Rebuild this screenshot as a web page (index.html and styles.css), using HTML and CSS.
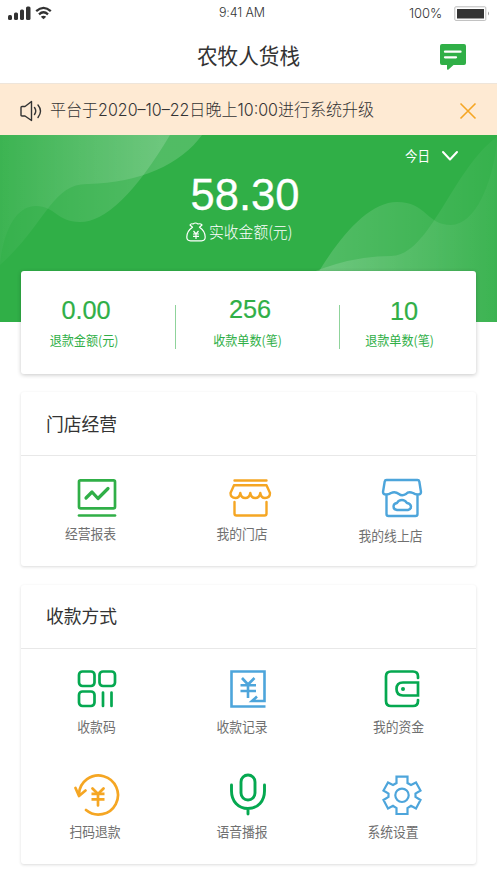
FILE: index.html
```html
<!DOCTYPE html>
<html lang="zh-CN">
<head>
<meta charset="utf-8">
<title>农牧人货栈</title>
<link rel="stylesheet" href="styles.css">
</head>
<body>
<header class="status">
  <svg class="signal" width="46" height="16" viewBox="0 0 46 16">
    <g fill="#333"><rect x="0" y="10" width="4" height="5" rx="1.5"/><rect x="6" y="7.500" width="4" height="7.500" rx="1.500"/><rect x="12" y="4.500" width="4" height="10.500" rx="1.500"/><rect x="18" y="1.500" width="4.500" height="13.500" rx="1.500"/></g>
    <g fill="none" stroke="#333" stroke-width="2.300"><path d="M28.200 6.200Q35.500-.400 42.800 6.200"/><path d="M31 9.300Q35.500 5.300 40 9.300"/></g>
    <path d="M32.800 11.700Q35.500 9.600 38.200 11.700L35.500 14.300Z" fill="#333"/>
  </svg>
  <span class="clock">9:41 AM</span>
  <span class="percent">100%</span>
  <svg class="battery" width="36" height="16" viewBox="0 0 36 16"><rect x=".8" y=".8" width="31" height="13.600" rx="1" fill="#fff" stroke="#bbb"/><rect x="3" y="3" width="27" height="9.500" fill="#333"/><path d="M34 5.500q2 2 0 4z" fill="#999"/></svg>
</header>
<div class="titlebar">
  <h1 class="title">农牧人货栈</h1>
  <svg class="message" width="28" height="28" viewBox="0 0 28 28"><path d="M3 1H25Q27 1 27 3V20Q27 22 25 22H14.500L9.500 26.500Q8 27.500 8 25.500V22H3Q1 22 1 20V3Q1 1 3 1Z" fill="#30af47"/><path d="M6 8.700H21.500M6 14.300H17" stroke="#fff" stroke-width="2.300" stroke-linecap="round"/></svg>
</div>
<div class="notice">
  <svg class="speaker" width="23" height="22" viewBox="0 0 23 22" fill="none" stroke="#333" stroke-width="1.400" stroke-linejoin="round" stroke-linecap="round"><path d="M1 7.500Q1 6.500 2 6.500H5L11.500 1.500V20.500L5 16H2Q1 16 1 15ZM14.500 7.500Q17 11 14.500 14.500M18 5Q23 11 18 17.500"/></svg>
  <span class="notice-text">平台于<span class="latin">2020–10–22</span>日晚上<span class="latin">10:00</span>进行系统升级</span>
  <svg class="close" width="18" height="18" viewBox="0 0 18 18" stroke="#f5a623" stroke-width="1.600"><path d="M1.500 1.500 16.500 16.500M16.500 1.500 1.500 16.500"/></svg>
</div>
<main class="page">
  <section class="hero">
    <svg class="waves" viewBox="0 0 497 187" preserveAspectRatio="none">
      <defs>
        <linearGradient id="left" gradientUnits="userSpaceOnUse" x1="0" y1="0" x2="200" y2="0"><stop offset="0" stop-color="#fff" stop-opacity=".03"/><stop offset=".8" stop-color="#fff" stop-opacity=".16"/><stop offset="1" stop-color="#fff" stop-opacity=".16"/></linearGradient>
        <linearGradient id="right" gradientUnits="userSpaceOnUse" x1="310" y1="0" x2="497" y2="0"><stop offset="0" stop-color="#fff" stop-opacity=".17"/><stop offset="1" stop-color="#fff" stop-opacity=".03"/></linearGradient>
      </defs>
      <path d="M0 0H170Q118 87 80 87C57 87 55 71 36 71C16 71 4 95 0 128Z" fill="url(#left)"/>
      <path d="M0 0H202C181 29 140 48 88 49C52 48 46 89 0 130Z" fill="url(#left)"/>
      <path d="M311 150C334 109 366 67 397 67C426 67 427 90 451 90C475 90 493 48 497 6V187H300Z" fill="url(#right)"/>
      <path d="M280 153Q337 121 391 121C430 121 453 33 497 2V187H280Z" fill="url(#right)"/>
    </svg>
    <div class="period"><span class="period-text">今日</span><svg width="18" height="12" viewBox="0 0 18 12" fill="none" stroke="#fff" stroke-width="2" stroke-linecap="round" stroke-linejoin="round"><path d="M2 2 9 9.500 16 2"/></svg></div>
    <div class="amount">58.30</div>
    <div class="caption">
      <svg width="20" height="20" viewBox="0 0 20 20" fill="none" stroke="#fff" stroke-width="1.200" stroke-linejoin="round"><path d="M6.500 5.200 4 3Q5 1.200 7 2Q9.500 0 12 2Q14.500 1.200 16 3L13.500 5.200Q19.200 9 19.200 15Q19.200 18.800 15.500 18.800H4.500Q.8 18.800 .8 15Q.8 9 6.500 5.200ZM7.500 9 10 12 12.500 9M10 12V17M7 12H13M7 14.300H13"/></svg>
      <span class="caption-text">实收金额(元)</span>
    </div>
  </section>
  <section class="card stats">
    <div class="stat refund"><b>0.00</b><span>退款金额(元)</span></div>
    <div class="stat orders"><b>256</b><span>收款单数(笔)</span></div>
    <div class="stat returns"><b>10</b><span>退款单数(笔)</span></div>
  </section>
  <section class="card shop">
    <h2>门店经营</h2>
    <div class="grid">
      <a class="item report"><svg width="46" height="46" viewBox="0 0 46 46" fill="none" stroke="#30af47" stroke-width="2.700" stroke-linecap="round" stroke-linejoin="round"><rect x="5" y="5.300" width="36" height="28" rx="1.500"/><path d="M5 40.500H41"/><path d="M12 23 18 17 24 23.500 34 13.500" stroke-width="3.200"/></svg><span>经营报表</span></a>
      <a class="item store"><svg width="46" height="46" viewBox="0 0 46 46" fill="none" stroke="#f5a623" stroke-width="2.400" stroke-linecap="round" stroke-linejoin="round"><path d="M7.500 5.500H39.500M7.500 10.300H39.500L43 18Q43 23 38 23Q34 23 33.300 18Q32.500 23 28.300 23Q24 23 23.300 18Q22.500 23 18.300 23Q14 23 13.300 18Q12.500 23 8.500 23Q3.500 23 3.500 18L7 10.300M7.500 27V38.500Q7.500 40.500 9.500 40.500H37.500Q39.500 40.500 39.500 38.500V27"/></svg><span>我的门店</span></a>
      <a class="item online"><svg width="46" height="46" viewBox="0 0 46 46" fill="none" stroke="#4da5db" stroke-width="2.400" stroke-linecap="round" stroke-linejoin="round"><path d="M7.500 5H38.500Q40 5 40.300 6.500L42 17Q42 19.500 39 19.500Q36 19.500 34 18Q29.500 16 27 19Q23 21.500 20 19Q16 16 12 18Q10 19.500 7 19.500Q4 19.500 4 17L5.700 6.500Q6 5 7.500 5ZM7.500 20V39Q7.500 41 9.500 41H36.500Q38.500 41 38.500 39V20M18 35H29Q32 34.500 32 31.500Q31.500 28.500 28 28Q26 25 23 25Q19.500 25 18 28Q14.500 28.500 14.500 31.500Q14.500 34.500 18 35Z"/></svg><span>我的线上店</span></a>
    </div>
  </section>
  <section class="card pay">
    <h2>收款方式</h2>
    <div class="grid">
      <a class="item code"><svg width="46" height="46" viewBox="0 0 46 46" fill="none" stroke="#05a850" stroke-width="2.700" stroke-linecap="round"><rect x="5" y="4.500" width="15.500" height="14.500" rx="3.500"/><rect x="25.500" y="4.500" width="15.500" height="14.500" rx="3.500"/><rect x="5" y="24.500" width="15.500" height="14.500" rx="3.500"/><path d="M29 25.500V39M37.500 25.500V39"/></svg><span>收款码</span></a>
      <a class="item record"><svg width="46" height="46" viewBox="0 0 46 46" fill="none" stroke="#4da5db" stroke-width="2.600"><path d="M40.500 39.500H6.500V4.500H39.500V34H27L32 29.500M17 11 23 17.500 29.500 11M23 17.500V31M15.500 18.300H31M15.500 24H31"/></svg><span>收款记录</span></a>
      <a class="item funds"><svg width="46" height="46" viewBox="0 0 46 46" fill="none" stroke="#05a850" stroke-width="2.700" stroke-linecap="round"><path d="M39 11V9.500Q39 4.500 34 4.500H12Q7 4.500 7 9.500V34Q7 39 12 39H34Q39 39 39 34V33M39 15.500H24Q17.500 15.500 17.500 22Q17.500 28.500 24 28.500H39Z"/><circle cx="24" cy="22" r="2" fill="#05a850" stroke="none"/></svg><span>我的资金</span></a>
      <a class="item scan"><svg width="46" height="46" viewBox="0 0 46 46" fill="none" stroke="#f5a623" stroke-width="2.700" stroke-linecap="round" stroke-linejoin="round"><path d="M5 22A19.500 19.500 0 1 1 12 38M1.500 16 5 24 11.500 18.500M18.500 16.500 24 22 29.500 16.500M24 22V33.500"/><path d="M17.500 21.800H30.500M17.500 27.300H30.500" stroke-linecap="butt"/></svg><span>扫码退款</span></a>
      <a class="item voice"><svg width="46" height="46" viewBox="0 0 46 46" fill="none" stroke="#05a850" stroke-width="2.900" stroke-linecap="round"><rect x="16" y="3" width="14" height="25" rx="7"/><path d="M6.500 13V19C6.500 29 13 36.500 23 36.500S39.500 29 39.500 19V13M23 37V42"/></svg><span>语音播报</span></a>
      <a class="item setting"><svg width="46" height="46" viewBox="0 0 46 46" fill="none" stroke="#4da5db" stroke-width="2.200"><path d="M17.500 4.700H28.500V11L32 13 37 10.500 41.500 18.500 36.500 21.500V25L41.500 28 37 36.500 32 33.800 28.500 36V42H17.500V36L14 33.800 9 36.500 4.500 28 9.500 25V21.500L4.500 18.500 9 10.500 14 13 17.500 11Z"/><circle cx="23" cy="23.300" r="6.700"/></svg><span>系统设置</span></a>
    </div>
  </section>
</main>
</body>
</html>
```
FILE: styles.css
```css
* { box-sizing: border-box; }
body { margin: 0; width: 497px; height: 883px; overflow: hidden; background: #fff; color: #333; font-family: "Liberation Sans", "Noto Sans CJK SC", sans-serif; }
svg { display: block; flex: none; }
.status { height: 30px; display: flex; align-items: flex-start; padding: 5px 7px 0 8px; font-family: Inter, sans-serif; font-weight: 300; line-height: 16px; }
.clock { width: 50px; margin-left: 165px; font-size: 12.5px; letter-spacing: -.15px; white-space: nowrap; }
.percent { width: 36px; margin-left: 140px; font-size: 13px; line-height: 17px; letter-spacing: -.1px; }
.battery { margin-left: 9px; margin-top: 1px; }
.titlebar { height: 53px; display: flex; justify-content: flex-end; padding: 13px 30px 0 0; }
.title { margin: -3px 139px 0 0; font: 400 20.600px/30px "Noto Sans CJK SC", sans-serif; white-space: nowrap; transform: scaleY(1.040); }
.notice { height: 52px; display: flex; align-items: center; padding: 3px 20px 0; background: #feead3; border-top: 1px solid #eee5da; }
.notice-text { margin: -5px auto 0 7px; font: 300 16.050px/24px "Noto Sans CJK SC", sans-serif; white-space: nowrap; transform: scaleY(1.080); }
.latin { font-family: Inter, sans-serif; font-size: 16px; }
.page { display: flex; flex-direction: column; }
.hero { position: relative; height: 187px; background: #30af47; color: #fff; }
.waves { position: absolute; inset: 0; width: 100%; height: 100%; }
.period { position: relative; height: 41px; display: flex; align-items: center; justify-content: flex-end; gap: 11px; padding-right: 38px; font: 400 12.500px/18px "Noto Sans CJK SC", sans-serif; }
.period-text { transform: scaleY(1.080); }
.amount { position: relative; height: 44px; margin-top: -3px; padding-right: 7px; text-align: center; font: 400 43.500px/44px "Liberation Sans", sans-serif; -webkit-text-stroke: .3px #fff; }
.caption { position: relative; display: flex; align-items: center; gap: 3px; height: 24px; margin: 3px 0 0 186px; font: 300 14.800px/24px "Noto Sans CJK SC", sans-serif; }
.caption-text { margin-top: -1px; transform: scaleY(1.080); }
.card { width: 455px; margin-left: 21px; background: #fff; border-radius: 3px; box-shadow: 0 1px 3px rgba(0, 0, 0, .14); }
.stats { position: relative; height: 103px; margin-top: -51px; display: flex; box-shadow: 0 1px 4px rgba(0, 0, 0, .22); }
.stat { position: relative; display: flex; flex-direction: column; align-items: center; padding-top: 23px; color: #30af47; }
.stat b { height: 32px; font: 400 25.300px/32px "Liberation Sans", sans-serif; -webkit-text-stroke: .2px #30af47; }
.stat span { margin-top: 5px; font: 400 12.100px/18px "Noto Sans CJK SC", sans-serif; transform: scaleY(1.060); white-space: nowrap; }
.refund { width: 154px; padding-right: 28px; }
.refund b { margin-left: 4px; }
.orders { width: 165px; padding-right: 20px; }
.orders b { margin: -1px 0 1px 5px; }
.returns { width: 136px; padding-right: 17px; }
.returns b { margin: 1px 0 -1px 9px; }
.orders::before, .orders::after { content: ""; position: absolute; top: 34px; width: 1px; height: 44px; background: #8fd39b; }
.orders::before { left: 0; }
.orders::after { right: 0; }
.shop { height: 174px; margin-top: 18px; }
.pay { height: 279px; margin-top: 19px; }
h2 { height: 64px; margin: 0; padding: 16px 0 0 25px; border-bottom: 1px solid #e8e8e8; font: 400 17.800px/30px "Noto Sans CJK SC", sans-serif; }
.pay h2 { padding-top: 15px; }
.grid { display: grid; grid-template-columns: repeat(3, 152px); grid-auto-rows: 105px; padding-top: 18px; }
.shop .grid { padding-top: 19px; }
.item { display: flex; flex-direction: column; align-items: center; color: #707070; font: 400 12.800px/20px "Noto Sans CJK SC", sans-serif; }
.item span { margin-top: 4px; white-space: nowrap; transform: scaleY(1.060); }
.shop .item span { margin-top: 3px; }
.report span { margin-right: 13px; }
.store svg { margin-left: 2px; }
.record svg, .voice svg { margin-right: 2px; }
.store span, .record span, .voice span { margin-right: 14px; }
.online svg, .funds svg, .setting svg { margin-left: 1px; }
.shop .online span { margin-top: 5px; margin-right: 21px; }
.code span { margin-right: 1px; }
.funds span { margin-right: 5px; }
.scan span { margin-right: 4px; }
.setting span { margin-right: 16px; }
```
